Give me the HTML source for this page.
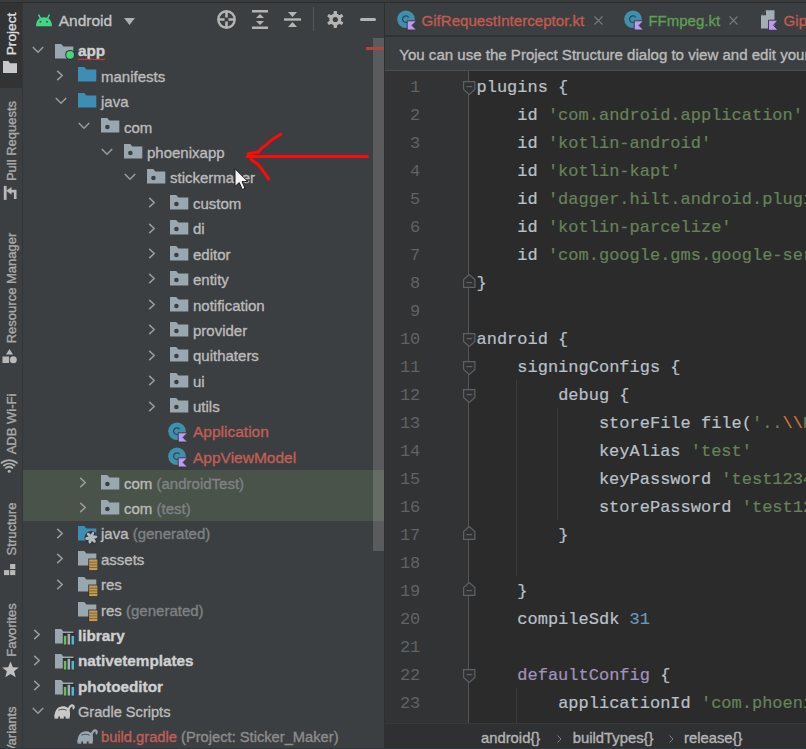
<!DOCTYPE html><html><head><meta charset="utf-8"><style>
html,body{margin:0;padding:0;}
body{width:806px;height:749px;overflow:hidden;position:relative;background:#3c3f41;font-family:"Liberation Sans",sans-serif;}
.t{position:absolute;white-space:pre;-webkit-text-stroke:0.35px currentColor;}
.i{position:absolute;overflow:visible;}
.r{position:absolute;}
.clip{position:absolute;overflow:hidden;}
</style></head><body>
<div class="r" style="left:0px;top:0px;width:22px;height:749px;background:#3c3f41;"></div>
<div class="r" style="left:0px;top:3px;width:22px;height:85px;background:#313335;"></div>
<div class="r" style="left:22px;top:0px;width:1px;height:749px;background:#333537;"></div>
<div class="r" style="left:0px;top:0px;width:806px;height:3px;background:#393b3d;"></div>
<div class="r" style="left:0px;top:2.2px;width:806px;height:1.3px;background:#2c2d2f;"></div>
<div class="t" style="left:12.2px;top:34.3px;font-size:13.7px;line-height:13.7px;color:#dcdcdc;font-weight:normal;transform:translate(-50%,-50%) rotate(-90deg);">Project</div>
<svg class="i" style="left:2.50px;top:60.50px;" width="14" height="12" viewBox="0 0 14 12"><path d="M0 0H5.5L7 2.2H14V12H0Z" fill="#c8c8c8"/></svg>
<div class="t" style="left:10.9px;top:140.5px;font-size:13px;line-height:13px;color:#a9a9a9;font-weight:normal;transform:translate(-50%,-50%) rotate(-90deg);">Pull Requests</div>
<svg class="i" style="left:0.00px;top:180.00px;" width="22" height="24" viewBox="0 0 22 24"><rect x="3.8" y="5.9" width="2.8" height="14" fill="#b8b8b8"/><path d="M6.2 10.8L11.5 6.9V14.8Z" fill="#b8b8b8"/><path d="M10.5 11.1H15.2V18.9" fill="none" stroke="#b8b8b8" stroke-width="2.6"/></svg>
<div class="t" style="left:11.4px;top:288.3px;font-size:13px;line-height:13px;color:#a9a9a9;font-weight:normal;transform:translate(-50%,-50%) rotate(-90deg);">Resource Manager</div>
<svg class="i" style="left:2.00px;top:349.00px;" width="15" height="15" viewBox="0 0 15 15"><path d="M7.5 0L11 5.5H4Z" fill="#b8b8b8"/><rect x="0.5" y="7.5" width="6.5" height="6.5" fill="#b8b8b8"/><circle cx="11.3" cy="10.8" r="3.5" fill="#b8b8b8"/></svg>
<div class="t" style="left:11px;top:424.04999999999995px;font-size:13px;line-height:13px;color:#a9a9a9;font-weight:normal;transform:translate(-50%,-50%) rotate(-90deg);">ADB Wi-Fi</div>
<svg class="i" style="left:0.00px;top:455.00px;" width="19" height="19" viewBox="0 0 19 19"><g fill="none" stroke="#b0b0b0" stroke-width="1.9" stroke-linecap="round"><path d="M1.6 7.8A12 12 0 0 1 16.8 7.8"/><path d="M3.9 10.5A8.5 8.5 0 0 1 14.5 10.5"/><path d="M6 12.9A5.3 5.3 0 0 1 12.4 12.9"/></g><circle cx="9.2" cy="16.3" r="1.5" fill="#b0b0b0"/></svg>
<div class="t" style="left:11px;top:528.75px;font-size:13px;line-height:13px;color:#a9a9a9;font-weight:normal;transform:translate(-50%,-50%) rotate(-90deg);">Structure</div>
<svg class="i" style="left:3.80px;top:563.90px;" width="12" height="12" viewBox="0 0 12 12"><rect x="6.1" y="0" width="5.2" height="5" fill="#b8b8b8"/><rect x="0" y="6.1" width="5.2" height="5" fill="#b8b8b8"/><rect x="6.1" y="6.1" width="5.2" height="5" fill="#b8b8b8"/></svg>
<div class="t" style="left:11px;top:630.25px;font-size:13px;line-height:13px;color:#a9a9a9;font-weight:normal;transform:translate(-50%,-50%) rotate(-90deg);">Favorites</div>
<svg class="i" style="left:1.50px;top:661.00px;" width="17" height="17" viewBox="0 0 17 17"><path d="M8.5 0.5L10.8 6.2L16.8 6.5L12.1 10.3L13.7 16.3L8.5 12.9L3.3 16.3L4.9 10.3L0.2 6.5L6.2 6.2Z" fill="#c0c0c0"/></svg>
<div class="t" style="left:11px;top:745.65px;font-size:13px;line-height:13px;color:#a9a9a9;font-weight:normal;transform:translate(-50%,-50%) rotate(-90deg);">Build Variants</div>
<div class="r" style="left:23px;top:3px;width:361px;height:746px;background:#3c3f41;"></div>
<svg class="i" style="left:35.50px;top:13.50px;" width="16" height="12.5" viewBox="0 0 16 12.5"><path d="M0 12.3C0 6.5 3.3 3.3 8 3.3C12.7 3.3 16 6.5 16 12.3Z" fill="#43d484"/><path d="M2.6 0.6L4.4 4.4M13.4 0.6L11.6 4.4" stroke="#43d484" stroke-width="1.5"/><circle cx="4.5" cy="7.8" r="1" fill="#2a6a45"/><circle cx="11" cy="7.8" r="1" fill="#2a6a45"/></svg>
<div class="t" style="left:58.70px;top:11.83px;font-size:15.5px;line-height:18.6px;color:#c4c4c4;font-weight:normal;font-family:'Liberation Sans', sans-serif;">Android</div>
<svg class="i" style="left:124.00px;top:17.50px;" width="11" height="7" viewBox="0 0 11 7"><path d="M0 0H11L5.5 7Z" fill="#b0b0b0"/></svg>
<svg class="i" style="left:217.00px;top:10.00px;" width="19" height="19" viewBox="0 0 19 19"><circle cx="9.5" cy="9.5" r="8.2" fill="none" stroke="#b4b4b4" stroke-width="2.4"/><path d="M9.5 2V7.6M9.5 11.4V17M2 9.5H7.6M11.4 9.5H17" stroke="#b4b4b4" stroke-width="2.6"/></svg>
<svg class="i" style="left:252.00px;top:10.00px;" width="16" height="19" viewBox="0 0 16 19"><path d="M0 1.2H16M0 17.8H16" stroke="#b4b4b4" stroke-width="2.4"/><path d="M8 4L12 8H4ZM8 15L4 11H12Z" fill="#b4b4b4"/></svg>
<svg class="i" style="left:284.00px;top:11.00px;" width="17" height="17" viewBox="0 0 17 17"><path d="M0 8.5H17" stroke="#b4b4b4" stroke-width="2.4"/><path d="M4 1H13L8.5 6ZM4 16H13L8.5 11Z" fill="#b4b4b4"/></svg>
<div class="r" style="left:313px;top:7px;width:1px;height:24px;background:#555759;"></div>
<svg class="i" style="left:326.50px;top:11.00px;" width="17" height="17" viewBox="0 0 17 17"><g fill="#b4b4b4"><circle cx="8.3" cy="8.5" r="6"/><rect x="6.6" y="0" width="3.4" height="17" rx="0.8"/><rect x="6.6" y="0" width="3.4" height="17" rx="0.8" transform="rotate(60 8.3 8.5)"/><rect x="6.6" y="0" width="3.4" height="17" rx="0.8" transform="rotate(-60 8.3 8.5)"/></g><circle cx="8.3" cy="8.5" r="2.6" fill="#3c3f41"/></svg>
<div class="r" style="left:360px;top:18px;width:16px;height:3px;background:#b4b4b4;border-radius:1.5px;"></div>
<div class="r" style="left:23px;top:470.01px;width:361px;height:50.86px;background:#4a5349;"></div>
<svg class="i" style="left:31.50px;top:46.20px;" width="12" height="8" viewBox="0 0 12 8"><path d="M0.8 1L6 6.2L11.2 1" fill="none" stroke="#9c9c9c" stroke-width="1.5"/></svg>
<svg class="i" style="left:55.10px;top:43.60px;" width="19" height="15" viewBox="0 0 19 15"><path d="M0 0H6.2L8.4 2.6H18.3V14.6H0Z" fill="#9aa7b0"/></svg>
<svg class="i" style="left:64.60px;top:49.40px;" width="10" height="10" viewBox="0 0 10 10"><circle cx="5.1" cy="5.8" r="4.9" fill="#24382b"/><circle cx="5.1" cy="5.8" r="3.9" fill="#45d67f"/></svg>
<div class="t" style="left:78.00px;top:42.02px;font-size:15.3px;line-height:18.36px;color:#cfd0d1;font-weight:bold;font-family:'Liberation Sans', sans-serif;">app</div>
<svg class="i" style="left:55.50px;top:70.03px;" width="8" height="11" viewBox="0 0 8 11"><path d="M1.2 0.9L6.2 5.5L1.2 10.1" fill="none" stroke="#9c9c9c" stroke-width="1.5"/></svg>
<svg class="i" style="left:77.60px;top:67.36px;" width="19" height="15" viewBox="0 0 19 15"><path d="M0 0H6.2L8.4 2.6H18.3V14.6H0Z" fill="#3e8db3"/></svg>
<div class="t" style="left:101.00px;top:67.73px;font-size:15px;line-height:18.0px;color:#bbbbbb;font-weight:normal;font-family:'Liberation Sans', sans-serif;">manifests</div>
<svg class="i" style="left:54.50px;top:97.06px;" width="12" height="8" viewBox="0 0 12 8"><path d="M0.8 1L6 6.2L11.2 1" fill="none" stroke="#9c9c9c" stroke-width="1.5"/></svg>
<svg class="i" style="left:77.60px;top:92.82px;" width="19" height="15" viewBox="0 0 19 15"><path d="M0 0H6.2L8.4 2.6H18.3V14.6H0Z" fill="#3e8db3"/></svg>
<div class="t" style="left:101.00px;top:93.16px;font-size:15px;line-height:18.0px;color:#bbbbbb;font-weight:normal;font-family:'Liberation Sans', sans-serif;">java</div>
<svg class="i" style="left:77.50px;top:122.49px;" width="12" height="8" viewBox="0 0 12 8"><path d="M0.8 1L6 6.2L11.2 1" fill="none" stroke="#9c9c9c" stroke-width="1.5"/></svg>
<svg class="i" style="left:100.60px;top:118.28px;" width="19" height="15" viewBox="0 0 19 15"><path d="M0 0H6.2L8.4 2.6H18.3V14.6H0Z" fill="#9aa7b0"/><circle cx="6.4" cy="9" r="2.3" fill="#3c3f41"/></svg>
<div class="t" style="left:124.00px;top:118.59px;font-size:15px;line-height:18.0px;color:#bbbbbb;font-weight:normal;font-family:'Liberation Sans', sans-serif;">com</div>
<svg class="i" style="left:100.50px;top:147.92px;" width="12" height="8" viewBox="0 0 12 8"><path d="M0.8 1L6 6.2L11.2 1" fill="none" stroke="#9c9c9c" stroke-width="1.5"/></svg>
<svg class="i" style="left:123.60px;top:143.74px;" width="19" height="15" viewBox="0 0 19 15"><path d="M0 0H6.2L8.4 2.6H18.3V14.6H0Z" fill="#9aa7b0"/><circle cx="6.4" cy="9" r="2.3" fill="#3c3f41"/></svg>
<div class="t" style="left:147.00px;top:144.02px;font-size:15px;line-height:18.0px;color:#bbbbbb;font-weight:normal;font-family:'Liberation Sans', sans-serif;">phoenixapp</div>
<svg class="i" style="left:123.50px;top:173.35px;" width="12" height="8" viewBox="0 0 12 8"><path d="M0.8 1L6 6.2L11.2 1" fill="none" stroke="#9c9c9c" stroke-width="1.5"/></svg>
<svg class="i" style="left:146.60px;top:169.20px;" width="19" height="15" viewBox="0 0 19 15"><path d="M0 0H6.2L8.4 2.6H18.3V14.6H0Z" fill="#9aa7b0"/><circle cx="6.4" cy="9" r="2.3" fill="#3c3f41"/></svg>
<div class="t" style="left:170.00px;top:169.45px;font-size:15px;line-height:18.0px;color:#bbbbbb;font-weight:normal;font-family:'Liberation Sans', sans-serif;">stickermaker</div>
<svg class="i" style="left:147.50px;top:197.18px;" width="8" height="11" viewBox="0 0 8 11"><path d="M1.2 0.9L6.2 5.5L1.2 10.1" fill="none" stroke="#9c9c9c" stroke-width="1.5"/></svg>
<svg class="i" style="left:169.60px;top:194.66px;" width="19" height="15" viewBox="0 0 19 15"><path d="M0 0H6.2L8.4 2.6H18.3V14.6H0Z" fill="#9aa7b0"/><circle cx="6.4" cy="9" r="2.3" fill="#3c3f41"/></svg>
<div class="t" style="left:193.00px;top:194.88px;font-size:15px;line-height:18.0px;color:#bbbbbb;font-weight:normal;font-family:'Liberation Sans', sans-serif;">custom</div>
<svg class="i" style="left:147.50px;top:222.61px;" width="8" height="11" viewBox="0 0 8 11"><path d="M1.2 0.9L6.2 5.5L1.2 10.1" fill="none" stroke="#9c9c9c" stroke-width="1.5"/></svg>
<svg class="i" style="left:169.60px;top:220.12px;" width="19" height="15" viewBox="0 0 19 15"><path d="M0 0H6.2L8.4 2.6H18.3V14.6H0Z" fill="#9aa7b0"/><circle cx="6.4" cy="9" r="2.3" fill="#3c3f41"/></svg>
<div class="t" style="left:193.00px;top:220.31px;font-size:15px;line-height:18.0px;color:#bbbbbb;font-weight:normal;font-family:'Liberation Sans', sans-serif;">di</div>
<svg class="i" style="left:147.50px;top:248.04px;" width="8" height="11" viewBox="0 0 8 11"><path d="M1.2 0.9L6.2 5.5L1.2 10.1" fill="none" stroke="#9c9c9c" stroke-width="1.5"/></svg>
<svg class="i" style="left:169.60px;top:245.58px;" width="19" height="15" viewBox="0 0 19 15"><path d="M0 0H6.2L8.4 2.6H18.3V14.6H0Z" fill="#9aa7b0"/><circle cx="6.4" cy="9" r="2.3" fill="#3c3f41"/></svg>
<div class="t" style="left:193.00px;top:245.74px;font-size:15px;line-height:18.0px;color:#bbbbbb;font-weight:normal;font-family:'Liberation Sans', sans-serif;">editor</div>
<svg class="i" style="left:147.50px;top:273.47px;" width="8" height="11" viewBox="0 0 8 11"><path d="M1.2 0.9L6.2 5.5L1.2 10.1" fill="none" stroke="#9c9c9c" stroke-width="1.5"/></svg>
<svg class="i" style="left:169.60px;top:271.04px;" width="19" height="15" viewBox="0 0 19 15"><path d="M0 0H6.2L8.4 2.6H18.3V14.6H0Z" fill="#9aa7b0"/><circle cx="6.4" cy="9" r="2.3" fill="#3c3f41"/></svg>
<div class="t" style="left:193.00px;top:271.17px;font-size:15px;line-height:18.0px;color:#bbbbbb;font-weight:normal;font-family:'Liberation Sans', sans-serif;">entity</div>
<svg class="i" style="left:147.50px;top:298.90px;" width="8" height="11" viewBox="0 0 8 11"><path d="M1.2 0.9L6.2 5.5L1.2 10.1" fill="none" stroke="#9c9c9c" stroke-width="1.5"/></svg>
<svg class="i" style="left:169.60px;top:296.50px;" width="19" height="15" viewBox="0 0 19 15"><path d="M0 0H6.2L8.4 2.6H18.3V14.6H0Z" fill="#9aa7b0"/><circle cx="6.4" cy="9" r="2.3" fill="#3c3f41"/></svg>
<div class="t" style="left:193.00px;top:296.60px;font-size:15px;line-height:18.0px;color:#bbbbbb;font-weight:normal;font-family:'Liberation Sans', sans-serif;">notification</div>
<svg class="i" style="left:147.50px;top:324.33px;" width="8" height="11" viewBox="0 0 8 11"><path d="M1.2 0.9L6.2 5.5L1.2 10.1" fill="none" stroke="#9c9c9c" stroke-width="1.5"/></svg>
<svg class="i" style="left:169.60px;top:321.96px;" width="19" height="15" viewBox="0 0 19 15"><path d="M0 0H6.2L8.4 2.6H18.3V14.6H0Z" fill="#9aa7b0"/><circle cx="6.4" cy="9" r="2.3" fill="#3c3f41"/></svg>
<div class="t" style="left:193.00px;top:322.03px;font-size:15px;line-height:18.0px;color:#bbbbbb;font-weight:normal;font-family:'Liberation Sans', sans-serif;">provider</div>
<svg class="i" style="left:147.50px;top:349.76px;" width="8" height="11" viewBox="0 0 8 11"><path d="M1.2 0.9L6.2 5.5L1.2 10.1" fill="none" stroke="#9c9c9c" stroke-width="1.5"/></svg>
<svg class="i" style="left:169.60px;top:347.42px;" width="19" height="15" viewBox="0 0 19 15"><path d="M0 0H6.2L8.4 2.6H18.3V14.6H0Z" fill="#9aa7b0"/><circle cx="6.4" cy="9" r="2.3" fill="#3c3f41"/></svg>
<div class="t" style="left:193.00px;top:347.46px;font-size:15px;line-height:18.0px;color:#bbbbbb;font-weight:normal;font-family:'Liberation Sans', sans-serif;">quithaters</div>
<svg class="i" style="left:147.50px;top:375.19px;" width="8" height="11" viewBox="0 0 8 11"><path d="M1.2 0.9L6.2 5.5L1.2 10.1" fill="none" stroke="#9c9c9c" stroke-width="1.5"/></svg>
<svg class="i" style="left:169.60px;top:372.88px;" width="19" height="15" viewBox="0 0 19 15"><path d="M0 0H6.2L8.4 2.6H18.3V14.6H0Z" fill="#9aa7b0"/><circle cx="6.4" cy="9" r="2.3" fill="#3c3f41"/></svg>
<div class="t" style="left:193.00px;top:372.89px;font-size:15px;line-height:18.0px;color:#bbbbbb;font-weight:normal;font-family:'Liberation Sans', sans-serif;">ui</div>
<svg class="i" style="left:147.50px;top:400.62px;" width="8" height="11" viewBox="0 0 8 11"><path d="M1.2 0.9L6.2 5.5L1.2 10.1" fill="none" stroke="#9c9c9c" stroke-width="1.5"/></svg>
<svg class="i" style="left:169.60px;top:398.34px;" width="19" height="15" viewBox="0 0 19 15"><path d="M0 0H6.2L8.4 2.6H18.3V14.6H0Z" fill="#9aa7b0"/><circle cx="6.4" cy="9" r="2.3" fill="#3c3f41"/></svg>
<div class="t" style="left:193.00px;top:398.32px;font-size:15px;line-height:18.0px;color:#bbbbbb;font-weight:normal;font-family:'Liberation Sans', sans-serif;">utils</div>
<svg class="i" style="left:167.80px;top:421.80px;" width="20" height="21" viewBox="0 0 20 21"><circle cx="9" cy="9.2" r="8.8" fill="#4190ab"/><path d="M11.6 7.3A3.3 3.3 0 1 0 11.6 11.1" fill="none" stroke="#22495a" stroke-width="1.2"/><path d="M10.2 10.8H19.6L15 15.4L19.6 20H10.2Z" fill="#bb9af0" stroke="#33363a" stroke-width="0.9"/></svg>
<div class="t" style="left:193.00px;top:423.28px;font-size:15.5px;line-height:18.6px;color:#c25e56;font-weight:normal;font-family:'Liberation Sans', sans-serif;">Application</div>
<svg class="i" style="left:167.80px;top:447.26px;" width="20" height="21" viewBox="0 0 20 21"><circle cx="9" cy="9.2" r="8.8" fill="#4190ab"/><path d="M11.6 7.3A3.3 3.3 0 1 0 11.6 11.1" fill="none" stroke="#22495a" stroke-width="1.2"/><path d="M10.2 10.8H19.6L15 15.4L19.6 20H10.2Z" fill="#bb9af0" stroke="#33363a" stroke-width="0.9"/></svg>
<div class="t" style="left:193.00px;top:448.71px;font-size:15.5px;line-height:18.6px;color:#c25e56;font-weight:normal;font-family:'Liberation Sans', sans-serif;">AppViewModel</div>
<svg class="i" style="left:78.50px;top:476.91px;" width="8" height="11" viewBox="0 0 8 11"><path d="M1.2 0.9L6.2 5.5L1.2 10.1" fill="none" stroke="#9c9c9c" stroke-width="1.5"/></svg>
<svg class="i" style="left:100.60px;top:474.72px;" width="19" height="15" viewBox="0 0 19 15"><path d="M0 0H6.2L8.4 2.6H18.3V14.6H0Z" fill="#9aa7b0"/><circle cx="6.4" cy="9" r="2.3" fill="#3c3f41"/></svg>
<div class="t" style="left:124.00px;top:474.61px;font-size:15px;line-height:18.0px;color:#bbbbbb;font-weight:normal;font-family:'Liberation Sans', sans-serif;">com <span style="color:#7f8284">(androidTest)</span></div>
<svg class="i" style="left:78.50px;top:502.34px;" width="8" height="11" viewBox="0 0 8 11"><path d="M1.2 0.9L6.2 5.5L1.2 10.1" fill="none" stroke="#9c9c9c" stroke-width="1.5"/></svg>
<svg class="i" style="left:100.60px;top:500.18px;" width="19" height="15" viewBox="0 0 19 15"><path d="M0 0H6.2L8.4 2.6H18.3V14.6H0Z" fill="#9aa7b0"/><circle cx="6.4" cy="9" r="2.3" fill="#3c3f41"/></svg>
<div class="t" style="left:124.00px;top:500.04px;font-size:15px;line-height:18.0px;color:#bbbbbb;font-weight:normal;font-family:'Liberation Sans', sans-serif;">com <span style="color:#7f8284">(test)</span></div>
<svg class="i" style="left:55.50px;top:527.77px;" width="8" height="11" viewBox="0 0 8 11"><path d="M1.2 0.9L6.2 5.5L1.2 10.1" fill="none" stroke="#9c9c9c" stroke-width="1.5"/></svg>
<svg class="i" style="left:77.60px;top:525.64px;" width="21" height="19" viewBox="0 0 21 19"><path d="M0 0H6.2L8.4 2.6H18.3V14.6H0Z" fill="#3e8db3"/><circle cx="13.3" cy="11.7" r="6.8" fill="#34383a"/><g fill="#b4bcc0"><ellipse cx="13.3" cy="8.6" rx="1.3" ry="3.1" transform="rotate(20 13.3 11.7)"/><ellipse cx="13.3" cy="8.6" rx="1.6" ry="3.1" transform="rotate(80 13.3 11.7)"/><ellipse cx="13.3" cy="8.6" rx="1.6" ry="3.1" transform="rotate(140 13.3 11.7)"/><ellipse cx="13.3" cy="8.6" rx="1.6" ry="3.1" transform="rotate(200 13.3 11.7)"/><ellipse cx="13.3" cy="8.6" rx="1.6" ry="3.1" transform="rotate(260 13.3 11.7)"/><ellipse cx="13.3" cy="8.6" rx="1.6" ry="3.1" transform="rotate(320 13.3 11.7)"/></g></svg>
<div class="t" style="left:101.00px;top:525.47px;font-size:15px;line-height:18.0px;color:#bbbbbb;font-weight:normal;font-family:'Liberation Sans', sans-serif;">java <span style="color:#7f8284">(generated)</span></div>
<svg class="i" style="left:55.50px;top:553.20px;" width="8" height="11" viewBox="0 0 8 11"><path d="M1.2 0.9L6.2 5.5L1.2 10.1" fill="none" stroke="#9c9c9c" stroke-width="1.5"/></svg>
<svg class="i" style="left:77.60px;top:551.10px;" width="21" height="21" viewBox="0 0 21 21"><path d="M0 0H6.2L8.4 2.6H18.3V14.6H0Z" fill="#9aa7b0"/><rect x="10.3" y="7.6" width="9.9" height="12.4" fill="#2e3032"/><rect x="11.1" y="8.4" width="8.3" height="10.8" fill="#c29a55"/><path d="M11.1 11.2H19.4M11.1 13.9H19.4M11.1 16.5H19.4" stroke="#7d6132" stroke-width="0.9"/></svg>
<div class="t" style="left:101.00px;top:550.90px;font-size:15px;line-height:18.0px;color:#bbbbbb;font-weight:normal;font-family:'Liberation Sans', sans-serif;">assets</div>
<svg class="i" style="left:55.50px;top:578.63px;" width="8" height="11" viewBox="0 0 8 11"><path d="M1.2 0.9L6.2 5.5L1.2 10.1" fill="none" stroke="#9c9c9c" stroke-width="1.5"/></svg>
<svg class="i" style="left:77.60px;top:576.56px;" width="21" height="21" viewBox="0 0 21 21"><path d="M0 0H6.2L8.4 2.6H18.3V14.6H0Z" fill="#9aa7b0"/><rect x="10.3" y="7.6" width="9.9" height="12.4" fill="#2e3032"/><rect x="11.1" y="8.4" width="8.3" height="10.8" fill="#c29a55"/><path d="M11.1 11.2H19.4M11.1 13.9H19.4M11.1 16.5H19.4" stroke="#7d6132" stroke-width="0.9"/></svg>
<div class="t" style="left:101.00px;top:576.33px;font-size:15px;line-height:18.0px;color:#bbbbbb;font-weight:normal;font-family:'Liberation Sans', sans-serif;">res</div>
<svg class="i" style="left:77.60px;top:602.02px;" width="21" height="21" viewBox="0 0 21 21"><path d="M0 0H6.2L8.4 2.6H18.3V14.6H0Z" fill="#9aa7b0"/><rect x="10.3" y="7.6" width="9.9" height="12.4" fill="#2e3032"/><rect x="11.1" y="8.4" width="8.3" height="10.8" fill="#c29a55"/><path d="M11.1 11.2H19.4M11.1 13.9H19.4M11.1 16.5H19.4" stroke="#7d6132" stroke-width="0.9"/></svg>
<div class="t" style="left:101.00px;top:601.76px;font-size:15px;line-height:18.0px;color:#bbbbbb;font-weight:normal;font-family:'Liberation Sans', sans-serif;">res <span style="color:#7f8284">(generated)</span></div>
<svg class="i" style="left:32.50px;top:629.49px;" width="8" height="11" viewBox="0 0 8 11"><path d="M1.2 0.9L6.2 5.5L1.2 10.1" fill="none" stroke="#9c9c9c" stroke-width="1.5"/></svg>
<svg class="i" style="left:55.10px;top:628.88px;" width="21" height="18" viewBox="0 0 21 18"><path d="M0 0H6.2L8.4 2.6H18.3V14.6H0Z" fill="#9aa7b0"/><path d="M7.8 4H19.9V16.3H7.8Z" fill="#2f3133"/><rect x="8.8" y="6.9" width="2.5" height="8.7" fill="#72b85e"/><rect x="12.6" y="4.8" width="2.5" height="10.8" fill="#a6b0b4"/><rect x="16.5" y="6.9" width="2.6" height="8.7" fill="#58b4d6"/></svg>
<div class="t" style="left:78.00px;top:626.91px;font-size:15.3px;line-height:18.36px;color:#cfd0d1;font-weight:bold;font-family:'Liberation Sans', sans-serif;">library</div>
<svg class="i" style="left:32.50px;top:654.92px;" width="8" height="11" viewBox="0 0 8 11"><path d="M1.2 0.9L6.2 5.5L1.2 10.1" fill="none" stroke="#9c9c9c" stroke-width="1.5"/></svg>
<svg class="i" style="left:55.10px;top:654.34px;" width="21" height="18" viewBox="0 0 21 18"><path d="M0 0H6.2L8.4 2.6H18.3V14.6H0Z" fill="#9aa7b0"/><path d="M7.8 4H19.9V16.3H7.8Z" fill="#2f3133"/><rect x="8.8" y="6.9" width="2.5" height="8.7" fill="#72b85e"/><rect x="12.6" y="4.8" width="2.5" height="10.8" fill="#a6b0b4"/><rect x="16.5" y="6.9" width="2.6" height="8.7" fill="#58b4d6"/></svg>
<div class="t" style="left:78.00px;top:652.34px;font-size:15.3px;line-height:18.36px;color:#cfd0d1;font-weight:bold;font-family:'Liberation Sans', sans-serif;">nativetemplates</div>
<svg class="i" style="left:32.50px;top:680.35px;" width="8" height="11" viewBox="0 0 8 11"><path d="M1.2 0.9L6.2 5.5L1.2 10.1" fill="none" stroke="#9c9c9c" stroke-width="1.5"/></svg>
<svg class="i" style="left:55.10px;top:679.80px;" width="21" height="18" viewBox="0 0 21 18"><path d="M0 0H6.2L8.4 2.6H18.3V14.6H0Z" fill="#9aa7b0"/><path d="M7.8 4H19.9V16.3H7.8Z" fill="#2f3133"/><rect x="8.8" y="6.9" width="2.5" height="8.7" fill="#72b85e"/><rect x="12.6" y="4.8" width="2.5" height="10.8" fill="#a6b0b4"/><rect x="16.5" y="6.9" width="2.6" height="8.7" fill="#58b4d6"/></svg>
<div class="t" style="left:78.00px;top:677.77px;font-size:15.3px;line-height:18.36px;color:#cfd0d1;font-weight:bold;font-family:'Liberation Sans', sans-serif;">photoeditor</div>
<svg class="i" style="left:31.50px;top:707.38px;" width="12" height="8" viewBox="0 0 12 8"><path d="M0.8 1L6 6.2L11.2 1" fill="none" stroke="#9c9c9c" stroke-width="1.5"/></svg>
<svg class="i" style="left:54.20px;top:703.56px;" width="21" height="16" viewBox="0 0 21 16"><path d="M0.5 12.5C0.5 6 4 2.2 9 2.2C13 2.2 16 4.5 16 9V12.5Z" fill="#c8c8c8"/><rect x="0.5" y="11" width="3.8" height="3.6" fill="#c8c8c8"/><rect x="6" y="11" width="3.8" height="3.6" fill="#c8c8c8"/><rect x="11.6" y="11" width="4" height="3.6" fill="#c8c8c8"/><path d="M14.3 6.5C15.3 2.5 17.3 1 18.8 1.5C20.2 2 20 4 18.8 4.8" fill="none" stroke="#c8c8c8" stroke-width="2.1"/><path d="M4.5 6.2C7 5 10 5 12.5 6.2" fill="none" stroke="#3c3f41" stroke-width="0.9"/></svg>
<div class="t" style="left:78.00px;top:703.86px;font-size:14.6px;line-height:17.52px;color:#bbbbbb;font-weight:normal;font-family:'Liberation Sans', sans-serif;">Gradle Scripts</div>
<svg class="i" style="left:77.20px;top:729.02px;" width="21" height="16" viewBox="0 0 21 16"><path d="M0.5 12.5C0.5 6 4 2.2 9 2.2C13 2.2 16 4.5 16 9V12.5Z" fill="#9aa7b0"/><rect x="0.5" y="11" width="3.8" height="3.6" fill="#9aa7b0"/><rect x="6" y="11" width="3.8" height="3.6" fill="#9aa7b0"/><rect x="11.6" y="11" width="4" height="3.6" fill="#9aa7b0"/><path d="M14.3 6.5C15.3 2.5 17.3 1 18.8 1.5C20.2 2 20 4 18.8 4.8" fill="none" stroke="#9aa7b0" stroke-width="2.1"/><path d="M4.5 6.2C7 5 10 5 12.5 6.2" fill="none" stroke="#3c3f41" stroke-width="0.9"/></svg>
<div class="t" style="left:101.00px;top:729.20px;font-size:14.7px;line-height:17.64px;color:#c25e56;font-weight:normal;font-family:'Liberation Sans', sans-serif;">build.gradle <span style="color:#8c8c8c">(Project: Sticker_Maker)</span></div>
<svg class="i" style="left:78.00px;top:58.20px;" width="28" height="3" viewBox="0 0 28 3"><path d="M0 1.6L3 1L6 1.6L9 1L12 1.6L15 1L18 1.6L21 1L24 1.6L27 1" fill="none" stroke="#b8403c" stroke-width="1.2"/></svg>
<div class="r" style="left:373px;top:38px;width:10.5px;height:513px;background:rgba(255,255,255,0.15);"></div>
<div class="r" style="left:366px;top:47px;width:18px;height:3.2px;background:#b0433f;"></div>
<div class="r" style="left:384px;top:3px;width:1px;height:746px;background:#2e2f30;"></div>
<div class="r" style="left:385px;top:3px;width:421px;height:33px;background:#3c3f41;"></div>
<div class="r" style="left:385px;top:35px;width:421px;height:1.5px;background:#323232;"></div>
<svg class="i" style="left:396.60px;top:10.00px;" width="20" height="21" viewBox="0 0 20 21"><circle cx="9" cy="9.2" r="8.8" fill="#4190ab"/><path d="M11.6 7.3A3.3 3.3 0 1 0 11.6 11.1" fill="none" stroke="#22495a" stroke-width="1.2"/><path d="M10.2 10.8H19.6L15 15.4L19.6 20H10.2Z" fill="#bb9af0" stroke="#33363a" stroke-width="0.9"/></svg>
<div class="t" style="left:421.50px;top:11.71px;font-size:15.1px;line-height:18.12px;color:#c25a50;font-weight:normal;font-family:'Liberation Sans', sans-serif;">GifRequestInterceptor.kt</div>
<svg class="i" style="left:594.00px;top:15.50px;" width="9" height="9" viewBox="0 0 9 9"><path d="M0.5 0.5L8.5 8.5M8.5 0.5L0.5 8.5" stroke="#767879" stroke-width="1.1"/></svg>
<svg class="i" style="left:623.50px;top:10.00px;" width="20" height="21" viewBox="0 0 20 21"><circle cx="9" cy="9.2" r="8.8" fill="#4190ab"/><path d="M11.6 7.3A3.3 3.3 0 1 0 11.6 11.1" fill="none" stroke="#22495a" stroke-width="1.2"/><path d="M10.2 10.8H19.6L15 15.4L19.6 20H10.2Z" fill="#bb9af0" stroke="#33363a" stroke-width="0.9"/></svg>
<div class="t" style="left:648.40px;top:11.80px;font-size:15.0px;line-height:18.0px;color:#5f9e56;font-weight:normal;font-family:'Liberation Sans', sans-serif;">FFmpeg.kt</div>
<svg class="i" style="left:729.00px;top:15.50px;" width="9" height="9" viewBox="0 0 9 9"><path d="M0.5 0.5L8.5 8.5M8.5 0.5L0.5 8.5" stroke="#767879" stroke-width="1.1"/></svg>
<svg class="i" style="left:760.50px;top:10.00px;" width="18" height="21" viewBox="0 0 18 21"><path d="M0 5.2L5 0.3H13.5V18.4H0Z" fill="#a3adb3"/><path d="M0 5.2H5V0.3Z" fill="#3c3f41"/><path d="M7.5 10.2H17L12.5 15.2L17 20.3H7.5Z" fill="#bb9af0" stroke="#33363a" stroke-width="0.9"/></svg>
<div class="t" style="left:783.60px;top:11.71px;font-size:15.1px;line-height:18.12px;color:#c25a50;font-weight:normal;font-family:'Liberation Sans', sans-serif;">GipCompressor.kt</div>
<div class="r" style="left:385px;top:36.5px;width:421px;height:34px;background:#3c3f41;"></div>
<div class="r" style="left:385px;top:70px;width:421px;height:1.2px;background:#4b4d4f;"></div>
<div class="t" style="left:399.30px;top:45.75px;font-size:15.06px;line-height:18.072px;color:#bbbbbb;font-weight:normal;font-family:'Liberation Sans', sans-serif;">You can use the Project Structure dialog to view and edit your project configuration</div>
<div class="r" style="left:385px;top:71px;width:84px;height:652px;background:#313335;"></div>
<div class="r" style="left:469px;top:71px;width:337px;height:652px;background:#2b2b2b;"></div>
<div class="r" style="left:468px;top:71px;width:1px;height:652px;background:#555555;"></div>
<div class="t" style="left:410.10px;top:77.67px;font-size:17px;line-height:20.4px;color:#606366;font-weight:normal;font-family:'Liberation Mono', monospace;-webkit-text-stroke:0;">1</div>
<div class="t" style="left:410.10px;top:105.67px;font-size:17px;line-height:20.4px;color:#606366;font-weight:normal;font-family:'Liberation Mono', monospace;-webkit-text-stroke:0;">2</div>
<div class="t" style="left:410.10px;top:133.67px;font-size:17px;line-height:20.4px;color:#606366;font-weight:normal;font-family:'Liberation Mono', monospace;-webkit-text-stroke:0;">3</div>
<div class="t" style="left:410.10px;top:161.67px;font-size:17px;line-height:20.4px;color:#606366;font-weight:normal;font-family:'Liberation Mono', monospace;-webkit-text-stroke:0;">4</div>
<div class="t" style="left:410.10px;top:189.67px;font-size:17px;line-height:20.4px;color:#606366;font-weight:normal;font-family:'Liberation Mono', monospace;-webkit-text-stroke:0;">5</div>
<div class="t" style="left:410.10px;top:217.67px;font-size:17px;line-height:20.4px;color:#606366;font-weight:normal;font-family:'Liberation Mono', monospace;-webkit-text-stroke:0;">6</div>
<div class="t" style="left:410.10px;top:245.67px;font-size:17px;line-height:20.4px;color:#606366;font-weight:normal;font-family:'Liberation Mono', monospace;-webkit-text-stroke:0;">7</div>
<div class="t" style="left:410.10px;top:273.67px;font-size:17px;line-height:20.4px;color:#606366;font-weight:normal;font-family:'Liberation Mono', monospace;-webkit-text-stroke:0;">8</div>
<div class="t" style="left:410.10px;top:301.67px;font-size:17px;line-height:20.4px;color:#606366;font-weight:normal;font-family:'Liberation Mono', monospace;-webkit-text-stroke:0;">9</div>
<div class="t" style="left:399.90px;top:329.67px;font-size:17px;line-height:20.4px;color:#606366;font-weight:normal;font-family:'Liberation Mono', monospace;-webkit-text-stroke:0;">10</div>
<div class="t" style="left:399.90px;top:357.67px;font-size:17px;line-height:20.4px;color:#606366;font-weight:normal;font-family:'Liberation Mono', monospace;-webkit-text-stroke:0;">11</div>
<div class="t" style="left:399.90px;top:385.67px;font-size:17px;line-height:20.4px;color:#606366;font-weight:normal;font-family:'Liberation Mono', monospace;-webkit-text-stroke:0;">12</div>
<div class="t" style="left:399.90px;top:413.67px;font-size:17px;line-height:20.4px;color:#606366;font-weight:normal;font-family:'Liberation Mono', monospace;-webkit-text-stroke:0;">13</div>
<div class="t" style="left:399.90px;top:441.67px;font-size:17px;line-height:20.4px;color:#606366;font-weight:normal;font-family:'Liberation Mono', monospace;-webkit-text-stroke:0;">14</div>
<div class="t" style="left:399.90px;top:469.67px;font-size:17px;line-height:20.4px;color:#606366;font-weight:normal;font-family:'Liberation Mono', monospace;-webkit-text-stroke:0;">15</div>
<div class="t" style="left:399.90px;top:497.67px;font-size:17px;line-height:20.4px;color:#606366;font-weight:normal;font-family:'Liberation Mono', monospace;-webkit-text-stroke:0;">16</div>
<div class="t" style="left:399.90px;top:525.67px;font-size:17px;line-height:20.4px;color:#606366;font-weight:normal;font-family:'Liberation Mono', monospace;-webkit-text-stroke:0;">17</div>
<div class="t" style="left:399.90px;top:553.67px;font-size:17px;line-height:20.4px;color:#606366;font-weight:normal;font-family:'Liberation Mono', monospace;-webkit-text-stroke:0;">18</div>
<div class="t" style="left:399.90px;top:581.67px;font-size:17px;line-height:20.4px;color:#606366;font-weight:normal;font-family:'Liberation Mono', monospace;-webkit-text-stroke:0;">19</div>
<div class="t" style="left:399.90px;top:609.67px;font-size:17px;line-height:20.4px;color:#606366;font-weight:normal;font-family:'Liberation Mono', monospace;-webkit-text-stroke:0;">20</div>
<div class="t" style="left:399.90px;top:637.67px;font-size:17px;line-height:20.4px;color:#606366;font-weight:normal;font-family:'Liberation Mono', monospace;-webkit-text-stroke:0;">21</div>
<div class="t" style="left:399.90px;top:665.67px;font-size:17px;line-height:20.4px;color:#606366;font-weight:normal;font-family:'Liberation Mono', monospace;-webkit-text-stroke:0;">22</div>
<div class="t" style="left:399.90px;top:693.67px;font-size:17px;line-height:20.4px;color:#606366;font-weight:normal;font-family:'Liberation Mono', monospace;-webkit-text-stroke:0;">23</div>
<div class="t" style="left:399.90px;top:721.67px;font-size:17px;line-height:20.4px;color:#606366;font-weight:normal;font-family:'Liberation Mono', monospace;-webkit-text-stroke:0;">24</div>
<svg class="i" style="left:463.20px;top:80.80px;" width="12.5" height="14" viewBox="0 0 12.5 14"><path d="M0.6 0.6H11.9V8.4L6.25 13.4L0.6 8.4Z" fill="#2f3133" stroke="#5f6163" stroke-width="1.2"/><path d="M3.3 5.6H9.2" stroke="#5f6163" stroke-width="1.2"/></svg>
<svg class="i" style="left:463.20px;top:273.80px;" width="12.5" height="14" viewBox="0 0 12.5 14"><path d="M0.6 13.4H11.9V5.6L6.25 0.6L0.6 5.6Z" fill="#2f3133" stroke="#5f6163" stroke-width="1.2"/><path d="M3.3 8.6H9.2" stroke="#5f6163" stroke-width="1.2"/></svg>
<svg class="i" style="left:463.20px;top:332.80px;" width="12.5" height="14" viewBox="0 0 12.5 14"><path d="M0.6 0.6H11.9V8.4L6.25 13.4L0.6 8.4Z" fill="#2f3133" stroke="#5f6163" stroke-width="1.2"/><path d="M3.3 5.6H9.2" stroke="#5f6163" stroke-width="1.2"/></svg>
<svg class="i" style="left:463.20px;top:360.80px;" width="12.5" height="14" viewBox="0 0 12.5 14"><path d="M0.6 0.6H11.9V8.4L6.25 13.4L0.6 8.4Z" fill="#2f3133" stroke="#5f6163" stroke-width="1.2"/><path d="M3.3 5.6H9.2" stroke="#5f6163" stroke-width="1.2"/></svg>
<svg class="i" style="left:463.20px;top:388.80px;" width="12.5" height="14" viewBox="0 0 12.5 14"><path d="M0.6 0.6H11.9V8.4L6.25 13.4L0.6 8.4Z" fill="#2f3133" stroke="#5f6163" stroke-width="1.2"/><path d="M3.3 5.6H9.2" stroke="#5f6163" stroke-width="1.2"/></svg>
<svg class="i" style="left:463.20px;top:525.80px;" width="12.5" height="14" viewBox="0 0 12.5 14"><path d="M0.6 13.4H11.9V5.6L6.25 0.6L0.6 5.6Z" fill="#2f3133" stroke="#5f6163" stroke-width="1.2"/><path d="M3.3 8.6H9.2" stroke="#5f6163" stroke-width="1.2"/></svg>
<svg class="i" style="left:463.20px;top:581.80px;" width="12.5" height="14" viewBox="0 0 12.5 14"><path d="M0.6 13.4H11.9V5.6L6.25 0.6L0.6 5.6Z" fill="#2f3133" stroke="#5f6163" stroke-width="1.2"/><path d="M3.3 8.6H9.2" stroke="#5f6163" stroke-width="1.2"/></svg>
<svg class="i" style="left:463.20px;top:668.80px;" width="12.5" height="14" viewBox="0 0 12.5 14"><path d="M0.6 0.6H11.9V8.4L6.25 13.4L0.6 8.4Z" fill="#2f3133" stroke="#5f6163" stroke-width="1.2"/><path d="M3.3 5.6H9.2" stroke="#5f6163" stroke-width="1.2"/></svg>
<div class="r" style="left:516.3px;top:379.6px;width:1px;height:196.0px;background:#393b3c;"></div>
<div class="r" style="left:557.1px;top:407.6px;width:1px;height:112.0px;background:#393b3c;"></div>
<div class="r" style="left:516.3px;top:687.6px;width:1px;height:56.0px;background:#393b3c;"></div>
<div class="clip" style="left:470px;top:71px;width:336px;height:652px;">
<div class="t" style="left:6.50px;top:7.37px;font-size:17px;line-height:20.4px;font-family:'Liberation Mono', monospace;-webkit-text-stroke-width:0.2px;"><span style="color:#b9c0c8">plugins {</span></div>
<div class="t" style="left:6.50px;top:35.37px;font-size:17px;line-height:20.4px;font-family:'Liberation Mono', monospace;-webkit-text-stroke-width:0.2px;">    <span style="color:#b9c0c8">id </span><span style="color:#66825a">'com.android.application'</span></div>
<div class="t" style="left:6.50px;top:63.37px;font-size:17px;line-height:20.4px;font-family:'Liberation Mono', monospace;-webkit-text-stroke-width:0.2px;">    <span style="color:#b9c0c8">id </span><span style="color:#66825a">'kotlin-android'</span></div>
<div class="t" style="left:6.50px;top:91.37px;font-size:17px;line-height:20.4px;font-family:'Liberation Mono', monospace;-webkit-text-stroke-width:0.2px;">    <span style="color:#b9c0c8">id </span><span style="color:#66825a">'kotlin-kapt'</span></div>
<div class="t" style="left:6.50px;top:119.37px;font-size:17px;line-height:20.4px;font-family:'Liberation Mono', monospace;-webkit-text-stroke-width:0.2px;">    <span style="color:#b9c0c8">id </span><span style="color:#66825a">'dagger.hilt.android.plugin'</span></div>
<div class="t" style="left:6.50px;top:147.37px;font-size:17px;line-height:20.4px;font-family:'Liberation Mono', monospace;-webkit-text-stroke-width:0.2px;">    <span style="color:#b9c0c8">id </span><span style="color:#66825a">'kotlin-parcelize'</span></div>
<div class="t" style="left:6.50px;top:175.37px;font-size:17px;line-height:20.4px;font-family:'Liberation Mono', monospace;-webkit-text-stroke-width:0.2px;">    <span style="color:#b9c0c8">id </span><span style="color:#66825a">'com.google.gms.google-services'</span></div>
<div class="t" style="left:6.50px;top:203.37px;font-size:17px;line-height:20.4px;font-family:'Liberation Mono', monospace;-webkit-text-stroke-width:0.2px;"><span style="color:#b9c0c8">}</span></div>
<div class="t" style="left:6.50px;top:259.37px;font-size:17px;line-height:20.4px;font-family:'Liberation Mono', monospace;-webkit-text-stroke-width:0.2px;"><span style="color:#b9c0c8">android {</span></div>
<div class="t" style="left:6.50px;top:287.37px;font-size:17px;line-height:20.4px;font-family:'Liberation Mono', monospace;-webkit-text-stroke-width:0.2px;">    <span style="color:#b9c0c8">signingConfigs {</span></div>
<div class="t" style="left:6.50px;top:315.37px;font-size:17px;line-height:20.4px;font-family:'Liberation Mono', monospace;-webkit-text-stroke-width:0.2px;">        <span style="color:#b9c0c8">debug {</span></div>
<div class="t" style="left:6.50px;top:343.37px;font-size:17px;line-height:20.4px;font-family:'Liberation Mono', monospace;-webkit-text-stroke-width:0.2px;">            <span style="color:#b9c0c8">storeFile file(</span><span style="color:#66825a">'..</span><span style="color:#cc7832">\\</span><span style="color:#66825a">KeyStore</span></div>
<div class="t" style="left:6.50px;top:371.37px;font-size:17px;line-height:20.4px;font-family:'Liberation Mono', monospace;-webkit-text-stroke-width:0.2px;">            <span style="color:#b9c0c8">keyAlias </span><span style="color:#66825a">'test'</span></div>
<div class="t" style="left:6.50px;top:399.37px;font-size:17px;line-height:20.4px;font-family:'Liberation Mono', monospace;-webkit-text-stroke-width:0.2px;">            <span style="color:#b9c0c8">keyPassword </span><span style="color:#66825a">'test1234'</span></div>
<div class="t" style="left:6.50px;top:427.37px;font-size:17px;line-height:20.4px;font-family:'Liberation Mono', monospace;-webkit-text-stroke-width:0.2px;">            <span style="color:#b9c0c8">storePassword </span><span style="color:#66825a">'test1234'</span></div>
<div class="t" style="left:6.50px;top:455.37px;font-size:17px;line-height:20.4px;font-family:'Liberation Mono', monospace;-webkit-text-stroke-width:0.2px;">        <span style="color:#b9c0c8">}</span></div>
<div class="t" style="left:6.50px;top:511.37px;font-size:17px;line-height:20.4px;font-family:'Liberation Mono', monospace;-webkit-text-stroke-width:0.2px;">    <span style="color:#b9c0c8">}</span></div>
<div class="t" style="left:6.50px;top:539.37px;font-size:17px;line-height:20.4px;font-family:'Liberation Mono', monospace;-webkit-text-stroke-width:0.2px;">    <span style="color:#b9c0c8">compileSdk </span><span style="color:#6897bb">31</span></div>
<div class="t" style="left:6.50px;top:595.37px;font-size:17px;line-height:20.4px;font-family:'Liberation Mono', monospace;-webkit-text-stroke-width:0.2px;">    <span style="color:#a293bb">defaultConfig </span><span style="color:#b9c0c8">{</span></div>
<div class="t" style="left:6.50px;top:623.37px;font-size:17px;line-height:20.4px;font-family:'Liberation Mono', monospace;-webkit-text-stroke-width:0.2px;">        <span style="color:#b9c0c8">applicationId </span><span style="color:#66825a">'com.phoenixapp.stickermaker'</span></div>
<div class="t" style="left:6.50px;top:651.37px;font-size:17px;line-height:20.4px;font-family:'Liberation Mono', monospace;-webkit-text-stroke-width:0.2px;">        <span style="color:#b9c0c8">minSdk </span><span style="color:#6897bb">21</span></div>
</div>
<div class="r" style="left:385px;top:723px;width:421px;height:26px;background:#2f3032;"></div>
<div class="r" style="left:385px;top:722.5px;width:421px;height:1px;background:#3a3a3a;"></div>
<div class="t" style="left:481.00px;top:729.99px;font-size:14.8px;line-height:17.76px;color:#b4b4b4;font-weight:normal;font-family:'Liberation Sans', sans-serif;">android{}</div>
<svg class="i" style="left:556.50px;top:735.00px;" width="5" height="8" viewBox="0 0 5 8"><path d="M0.5 0.5L4 4L0.5 7.5" fill="none" stroke="#808080" stroke-width="1"/></svg>
<div class="t" style="left:572.80px;top:729.99px;font-size:14.8px;line-height:17.76px;color:#b4b4b4;font-weight:normal;font-family:'Liberation Sans', sans-serif;">buildTypes{}</div>
<svg class="i" style="left:668.50px;top:735.00px;" width="5" height="8" viewBox="0 0 5 8"><path d="M0.5 0.5L4 4L0.5 7.5" fill="none" stroke="#808080" stroke-width="1"/></svg>
<div class="t" style="left:684.00px;top:729.99px;font-size:14.8px;line-height:17.76px;color:#b4b4b4;font-weight:normal;font-family:'Liberation Sans', sans-serif;">release{}</div>
<div class="r" style="left:0px;top:748px;width:806px;height:1px;background:#30363b;"></div>
<svg class="i" style="left:240.00px;top:128.00px;" width="135" height="60" viewBox="0 0 135 60"><g fill="none" stroke="#ff0a0a" stroke-width="3" stroke-linecap="round" stroke-linejoin="round"><path d="M7.3 28.6H127.4"/><path d="M8.3 25.8L18.5 24L21.3 20.3L25 17.8L31.5 12L40.8 6.3"/><path d="M11 31.4L17.6 36L22.2 41.7L28.7 51"/></g></svg>
<svg class="i" style="left:233.50px;top:168.00px;" width="16" height="23" viewBox="0 0 16 23"><path d="M1 0.8V18.5L5.2 14.6L8.3 21.5L11 20.3L8 13.6H13.8Z" fill="#f4f4f4" stroke="#1a1a1a" stroke-width="1"/></svg>
</body></html>
